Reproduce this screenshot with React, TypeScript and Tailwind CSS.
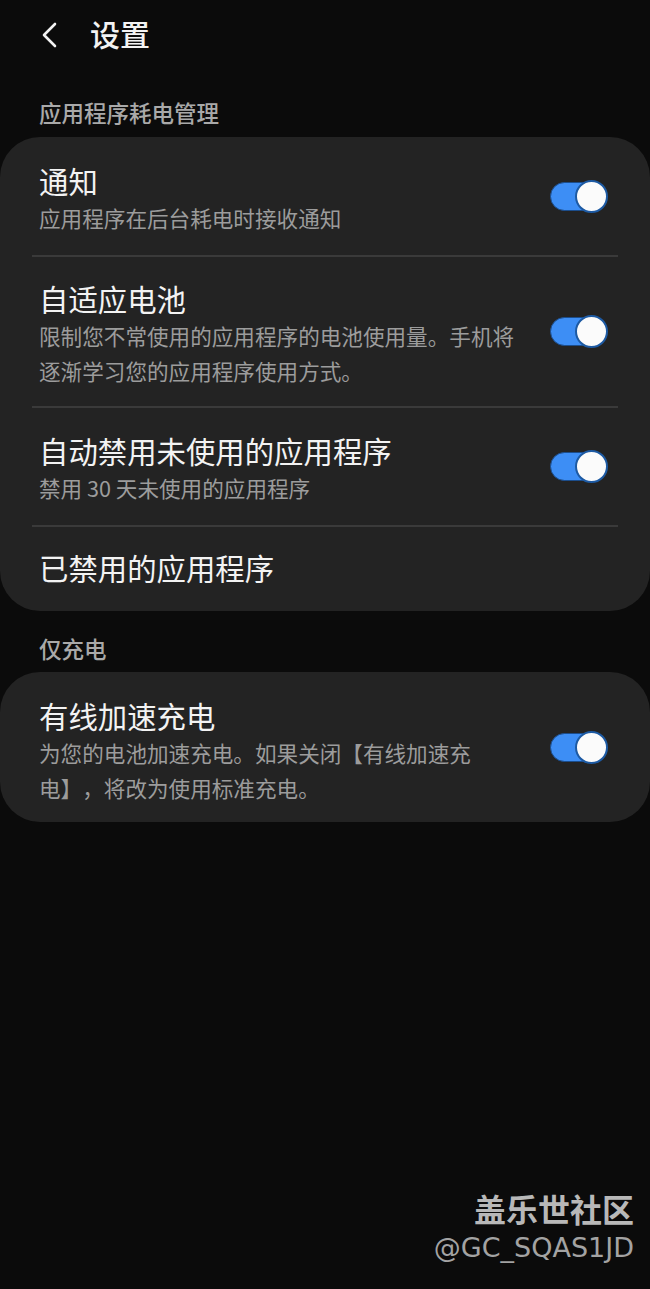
import React from 'react';

const FONT = '"Noto Sans CJK SC", "Noto Sans", sans-serif';

function Toggle() {
  return (
    <div className="relative w-[58px] h-[33px] shrink-0 flex items-center">
      <div className="w-[56px] h-[29px] rounded-full bg-[#3d8ef5] border border-[#1b4d8c]" />
      <div className="absolute right-0 top-0 w-[33px] h-[33px] rounded-full bg-[#fbfbfb] border-2 border-[#1d5aa3]" />
    </div>
  );
}

function Row({
  title,
  lines = [],
  toggle = true,
  pt = 'pt-[25px]',
  pb = 'pb-[20px]',
}: {
  title: string;
  lines?: string[];
  toggle?: boolean;
  pt?: string;
  pb?: string;
}) {
  return (
    <div className="flex items-center justify-between pl-[39px] pr-[42px]">
      <div className={`flex flex-col ${pt} ${pb}`}>
        <span className="text-[29.4px] leading-[36px] text-[#f3f3f3]">{title}</span>
        {lines.length > 0 && (
          <div className="mt-[2px] flex flex-col">
            {lines.map((l) => (
              <span key={l} className="text-[21.6px] leading-[35px] text-[#9c9c9c] whitespace-nowrap">
                {l}
              </span>
            ))}
          </div>
        )}
      </div>
      {toggle && <Toggle />}
    </div>
  );
}

function Divider() {
  return <div className="mx-[32px] h-[2px] bg-[#3a3a3a]" />;
}

function SectionLabel({ children }: { children: React.ReactNode }) {
  return (
    <div className="px-[39px] text-[22.5px] leading-[32px] font-medium text-[#a9a9a9]">{children}</div>
  );
}

export default function App() {
  return (
    <div
      className="w-[650px] h-[1289px] bg-[#0b0b0b] flex flex-col overflow-hidden [text-spacing-trim:space-all]"
      style={{ fontFamily: FONT }}
    >
      {/* Header */}
      <div className="flex items-center h-[70px] pl-[40px]">
        <svg width="20" height="26" viewBox="0 0 20 26" fill="none" className="mr-[30px]">
          <path d="M15 2 L4 13 L15 24" stroke="#f2f2f2" strokeWidth="2.6" strokeLinecap="round" strokeLinejoin="round" />
        </svg>
        <span className="text-[30px] font-medium text-[#f3f3f3] leading-none mb-[5px]">设置</span>
      </div>

      <div className="mt-[26px]">
        <SectionLabel>应用程序耗电管理</SectionLabel>
      </div>

      <div className="mt-[9px] bg-[#232323] rounded-[40px]">
        <Row title="通知" lines={['应用程序在后台耗电时接收通知']} pt="pt-[25px]" pb="pb-[20px]" />
        <Divider />
        <Row
          title="自适应电池"
          lines={['限制您不常使用的应用程序的电池使用量。手机将', '逐渐学习您的应用程序使用方式。']}
          pt="pt-[23px]"
          pb="pb-[18px]"
        />
        <Divider />
        <Row title="自动禁用未使用的应用程序" lines={['禁用 30 天未使用的应用程序']} pt="pt-[24px]" pb="pb-[20px]" />
        <Divider />
        <Row title="已禁用的应用程序" toggle={false} pt="pt-[22px]" pb="pb-[26px]" />
      </div>

      <div className="mt-[21px]">
        <SectionLabel>仅充电</SectionLabel>
      </div>

      <div className="mt-[8px] bg-[#232323] rounded-[40px]">
        <Row
          title="有线加速充电"
          lines={['为您的电池加速充电。如果关闭【有线加速充', '电】，将改为使用标准充电。']}
          pt="pt-[25px]"
          pb="pb-[17px]"
        />
      </div>

      {/* Watermark */}
      <div className="mt-auto mb-[21px] pr-[16px] flex flex-col items-end">
        <span className="text-[32px] leading-[40px] font-bold text-[#b8b8b8]">盖乐世社区</span>
        <span
          className="text-[27px] leading-[40px] text-[#a3a3a3]"
          style={{ fontFamily: '"DejaVu Sans", "Open Sans", sans-serif' }}
        >
          @GC_SQAS1JD
        </span>
      </div>
    </div>
  );
}
